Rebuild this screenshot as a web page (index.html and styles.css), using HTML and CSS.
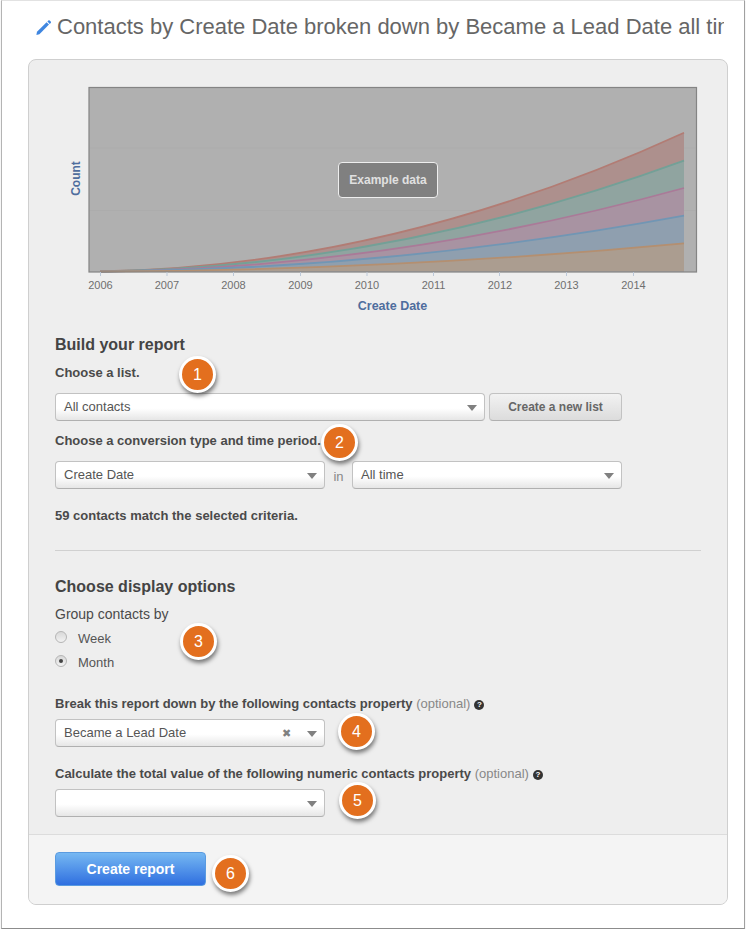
FILE: index.html
```html
<!DOCTYPE html>
<html lang="en">
<head>
<meta charset="utf-8">
<title>Contacts report</title>
<link rel="stylesheet" href="styles.css">
</head>
<body>
<div class="window">
  <header class="title-row">
    <svg class="pencil" width="15" height="16" viewBox="0 0 15 16" aria-hidden="true">
      <path d="M1 11.800 10.600 2.200 13 4.600 3.400 14.200 0.400 15z" fill="#3f86e0"/>
      <path d="M11.400 1.400 12.300 0.600a1 1 0 0 1 1.400 0l1 1a1 1 0 0 1 0 1.400l-0.900 0.900z" fill="#3f86e0"/>
    </svg>
    <h1 class="title">Contacts by Create Date broken down by Became a Lead Date all time</h1>
  </header>

  <main class="panel">
    <div class="chart-wrap">
      <svg class="chart" width="698" height="255" viewBox="29 60 698 255" role="img" aria-label="Example chart">
        <rect x="89" y="87.500" width="607.500" height="184.500" fill="#b0b0b0"/>
        <path class="grid" d="M89 148H696M89 210.500H696"/>
        <path d="M100 271.500Q392 266.500 684 132.700V271.500Z" fill="#ad908d"/>
        <path d="M100 271.500Q392 267.500 684 160.700V271.500Z" fill="#90a4a0"/>
        <path d="M100 271.500Q392 268.500 684 188V271.500Z" fill="#a893a2"/>
        <path d="M100 271.500Q392 269.500 684 215.700V271.500Z" fill="#8f9faf"/>
        <path d="M100 271.500Q392 270.500 684 243.300V271.500Z" fill="#ab9d90"/>
        <path class="line" d="M100 271.500Q392 266.500 684 132.700" stroke="#b27c74"/>
        <path class="line" d="M100 271.500Q392 267.500 684 160.700" stroke="#73a097"/>
        <path class="line" d="M100 271.500Q392 268.500 684 188" stroke="#aa7a98"/>
        <path class="line" d="M100 271.500Q392 269.500 684 215.700" stroke="#7196b4"/>
        <path class="line" d="M100 271.500Q392 270.500 684 243.300" stroke="#b48f70"/>
        <rect class="frame" x="89" y="87.500" width="607.500" height="184.500"/>
        <path class="ticks" d="M100.500 272v4M167 272v4M233.500 272v4M300.500 272v4M367 272v4M433.500 272v4M499.500 272v4M566.500 272v4M633.500 272v4"/>
        <g class="tick-labels">
          <text x="100.500" y="289">2006</text>
          <text x="167" y="289">2007</text>
          <text x="233.500" y="289">2008</text>
          <text x="300.500" y="289">2009</text>
          <text x="367" y="289">2010</text>
          <text x="433.500" y="289">2011</text>
          <text x="500" y="289">2012</text>
          <text x="566.500" y="289">2013</text>
          <text x="633.500" y="289">2014</text>
        </g>
        <text class="axis-title" x="392.500" y="310">Create Date</text>
        <text class="axis-title axis-count" transform="translate(79.500 178.500) rotate(-90)">Count</text>
        <rect class="note-box" x="338.500" y="162.500" width="99" height="35" rx="3.500"/>
        <text class="note-text" x="388" y="184">Example data</text>
      </svg>
    </div>

    <section class="form">
      <h2 class="heading">Build your report</h2>
      <div class="label label-list">Choose a list.</div>
      <div class="row">
        <div class="select select-wide">All contacts</div>
        <button class="btn" type="button">Create a new list</button>
      </div>
      <div class="label label-conv">Choose a conversion type and time period.</div>
      <div class="row">
        <div class="select select-half">Create Date</div>
        <span class="in">in</span>
        <div class="select select-half">All time</div>
      </div>
      <div class="label label-match">59 contacts match the selected criteria.</div>
      <hr class="divider">
      <h2 class="heading heading-display">Choose display options</h2>
      <div class="label-plain">Group contacts by</div>
      <div class="radios">
        <div class="radio-row"><span class="radio"></span>Week</div>
        <div class="radio-row"><span class="radio radio-on"></span>Month</div>
      </div>
      <div class="label label-break">Break this report down by the following contacts property <span class="optional">(optional)</span><span class="help">?</span></div>
      <div class="select select-half select-clear">Became a Lead Date<span class="clear">✖</span></div>
      <div class="label label-calc">Calculate the total value of the following numeric contacts property <span class="optional">(optional)</span><span class="help">?</span></div>
      <div class="select select-half"></div>
    </section>

    <footer class="footer">
      <button class="primary" type="button">Create report</button>
    </footer>

    <span class="badge b1">1</span>
    <span class="badge b2">2</span>
    <span class="badge b3">3</span>
    <span class="badge b4">4</span>
    <span class="badge b5">5</span>
    <span class="badge b6">6</span>
  </main>
</div>
</body>
</html>
```
FILE: styles.css
```css
* { box-sizing: border-box; }
html, body { margin: 0; padding: 0; background: #fff; }
body { font-family: "Liberation Sans", Arial, sans-serif; color: #4a4a4a; overflow: hidden; }

.window {
  width: 744px;
  height: 929px;
  margin-left: 1px;
  background: #fff;
  border-left: 1px solid #b4b4b4;
  border-right: 1px solid #a0a0a0;
  border-top: 1px solid #e2e2e2;
  border-bottom: 1px solid #8c8c8c;
  box-shadow: 0 1px 1px #ccc;
}

.title-row {
  display: flex;
  align-items: center;
  gap: 6px;
  height: 52px;
  padding-left: 34px;
  margin-bottom: 6px;
  width: 722px;
  overflow: hidden;
}
.pencil { flex: none; margin-top: 2px; }
.title {
  margin: 0;
  font-size: 22px;
  font-weight: 400;
  color: #666;
  white-space: nowrap;
}

.panel {
  position: relative;
  width: 700px;
  height: 846px;
  margin-left: 26px;
  background: #eee;
  border: 1px solid #cfcfcf;
  border-radius: 8px;
}

.chart-wrap { height: 255px; }
.chart { display: block; }
.chart text { font-family: "Liberation Sans", Arial, sans-serif; }
.grid { stroke: #acacac; stroke-width: 1; fill: none; }
.line { fill: none; stroke-width: 1.800; }
.frame { fill: none; stroke: #848484; stroke-width: 1.200; }
.ticks { stroke: #bcc8d8; stroke-width: 1; }
.tick-labels text { font-size: 11px; fill: #6f6f6f; text-anchor: middle; }
.axis-title { font-size: 12.500px; font-weight: 700; fill: #4f6d9d; text-anchor: middle; }
.axis-count { font-size: 12px; }
.note-box { fill: #808080; stroke: #eee; stroke-width: 1; }
.note-text { font-size: 12px; font-weight: 700; fill: #e0e0e0; text-anchor: middle; }

.form { padding-left: 26px; }
.heading {
  margin: 20px 0 0;
  font-size: 16px;
  line-height: 20px;
  font-weight: 700;
  color: #444;
}
.heading-display { margin-top: 26px; }
.label {
  font-size: 13px;
  line-height: 16px;
  font-weight: 700;
  color: #4a4a4a;
}
.label-list { margin: 10px 0 12px; }
.label-conv { margin: 12px 0 12px; }
.label-match { margin-top: 19px; }
.label-break { margin: 22px 0 7px; }
.label-calc { margin: 19px 0 7px; }
.label-plain { margin-top: 9px; font-size: 14px; line-height: 16px; color: #4a4a4a; }
.optional { font-weight: 400; color: #888; }
.help {
  display: inline-block;
  width: 10px;
  height: 10px;
  margin-left: 4px;
  border-radius: 50%;
  background: #333;
  color: #fff;
  font-size: 8px;
  line-height: 10px;
  font-weight: 700;
  text-align: center;
  vertical-align: 1px;
}

.row { display: flex; align-items: center; }
.select {
  position: relative;
  height: 28px;
  padding-left: 8px;
  font-size: 13px;
  line-height: 25px;
  color: #555;
  background: linear-gradient(#fff 55%, #e6e6e6);
  border: 1px solid #c2c2c2;
  border-bottom-color: #b0b0b0;
  border-radius: 4px;
}
.select::after {
  content: "";
  position: absolute;
  right: 7px;
  top: 11px;
  border-left: 5px solid transparent;
  border-right: 5px solid transparent;
  border-top: 6px solid #808080;
}
.select-wide { width: 430px; }
.select-half { width: 270px; }
.clear {
  position: absolute;
  right: 33px;
  top: 1px;
  font-size: 11px;
  color: #808080;
}

.btn {
  width: 133px;
  height: 28px;
  margin-left: 4px;
  padding: 0;
  font: 700 12px "Liberation Sans", Arial, sans-serif;
  color: #666;
  background: linear-gradient(#f2f2f2, #dcdcdc);
  border: 1px solid #c2c2c2;
  border-bottom-color: #b0b0b0;
  border-radius: 4px;
}
.in {
  width: 27px;
  padding-top: 2px;
  text-align: center;
  font-size: 13px;
  color: #888;
}

.divider {
  height: 1px;
  margin: 26px 0 0;
  width: 646px;
  border: 0;
  background: #d0d0d0;
}

.radios { margin: 4px 0 0; }
.radio-row {
  display: flex;
  align-items: center;
  gap: 11px;
  height: 24px;
  font-size: 13px;
  color: #555;
}
.radio {
  position: relative;
  width: 12px;
  height: 12px;
  margin-top: -3px;
  border-radius: 50%;
  border: 1px solid #b5b5b5;
  background: linear-gradient(#d8d8d8, #f2f2f2);
}
.radio-on::after {
  content: "";
  position: absolute;
  left: 3px;
  top: 3px;
  width: 4px;
  height: 4px;
  border-radius: 50%;
  background: #444;
}

.footer {
  height: 70px;
  margin-top: 17px;
  padding: 17px 0 0 26px;
  background: #f4f4f4;
  border-top: 1px solid #dcdcdc;
  border-radius: 0 0 7px 7px;
}
.primary {
  display: block;
  width: 151px;
  height: 34px;
  padding: 0;
  font: 700 14px "Liberation Sans", Arial, sans-serif;
  color: #fff;
  background: linear-gradient(#76b8f2, #2f6fe0);
  border: 1px solid #5a9be0;
  border-radius: 4px;
}

.badge {
  position: absolute;
  width: 37px;
  height: 37px;
  font-size: 16px;
  line-height: 31px;
  text-align: center;
  color: #fff;
  background: #e36f1e;
  border: 3px solid #fff;
  border-radius: 50%;
  box-shadow: 1px 3px 4px rgba(0, 0, 0, 0.5);
}
.b1 { left: 150px; top: 296px; }
.b2 { left: 292px; top: 364px; }
.b3 { left: 151px; top: 563px; }
.b4 { left: 309px; top: 653px; }
.b5 { left: 310px; top: 722px; }
.b6 { left: 183px; top: 795px; }
```
